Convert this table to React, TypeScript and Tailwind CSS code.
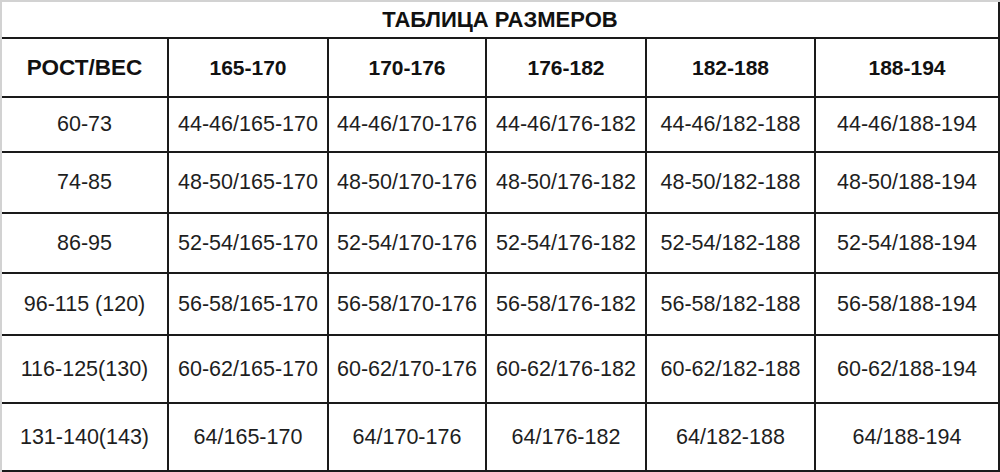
const heights = ["60-73", "74-85", "86-95", "96-115 (120)", "116-125(130)", "131-140(143)"];
const sizes = ["44-46", "48-50", "52-54", "56-58", "60-62", "64"];
const growth = ["165-170", "170-176", "176-182", "182-188", "188-194"];
const rowHeights = ["h-[55px]", "h-[61px]", "h-[60px]", "h-[62px]", "h-[68px]", "h-[68px]"];

export default function App() {
  return (
    <div
      className="w-[1000px] h-[472px] bg-white border-t-2 border-l-2 border-[#d2d2d2] text-[#1e1e1e]"
      style={{ fontFamily: '"Liberation Sans", Arial, sans-serif' }}
    >
      <div className="grid grid-cols-[167px_160px_158px_160px_169px_184px]">
        <div className="col-span-6 h-[37px] flex items-center justify-center border-b-2 border-r-2 border-[#1a1a1a] text-[22px] font-bold text-[#111]">
          ТАБЛИЦА РАЗМЕРОВ
        </div>

        <div className="h-[59px] flex items-center justify-center border-b-2 border-r-2 border-[#1a1a1a] text-[22.5px] font-bold text-[#111]">
          РОСТ/ВЕС
        </div>
        {growth.map((g) => (
          <div
            key={g}
            className="h-[59px] flex items-center justify-center border-b-2 border-r-2 border-[#1a1a1a] text-[21px] font-bold text-[#111]"
          >
            {g}
          </div>
        ))}

        {heights.map((h, i) => (
          <Row key={h} label={h} size={sizes[i]} height={rowHeights[i]} />
        ))}
      </div>
    </div>
  );
}

function Row({ label, size, height }: { label: string; size: string; height: string }) {
  const cell = `${height} flex items-center justify-center border-b-2 border-r-2 border-[#1a1a1a] text-[21.5px] whitespace-nowrap`;
  return (
    <>
      <div className={cell}>{label}</div>
      {growth.map((g) => (
        <div key={g} className={cell}>
          {size}/{g}
        </div>
      ))}
    </>
  );
}
